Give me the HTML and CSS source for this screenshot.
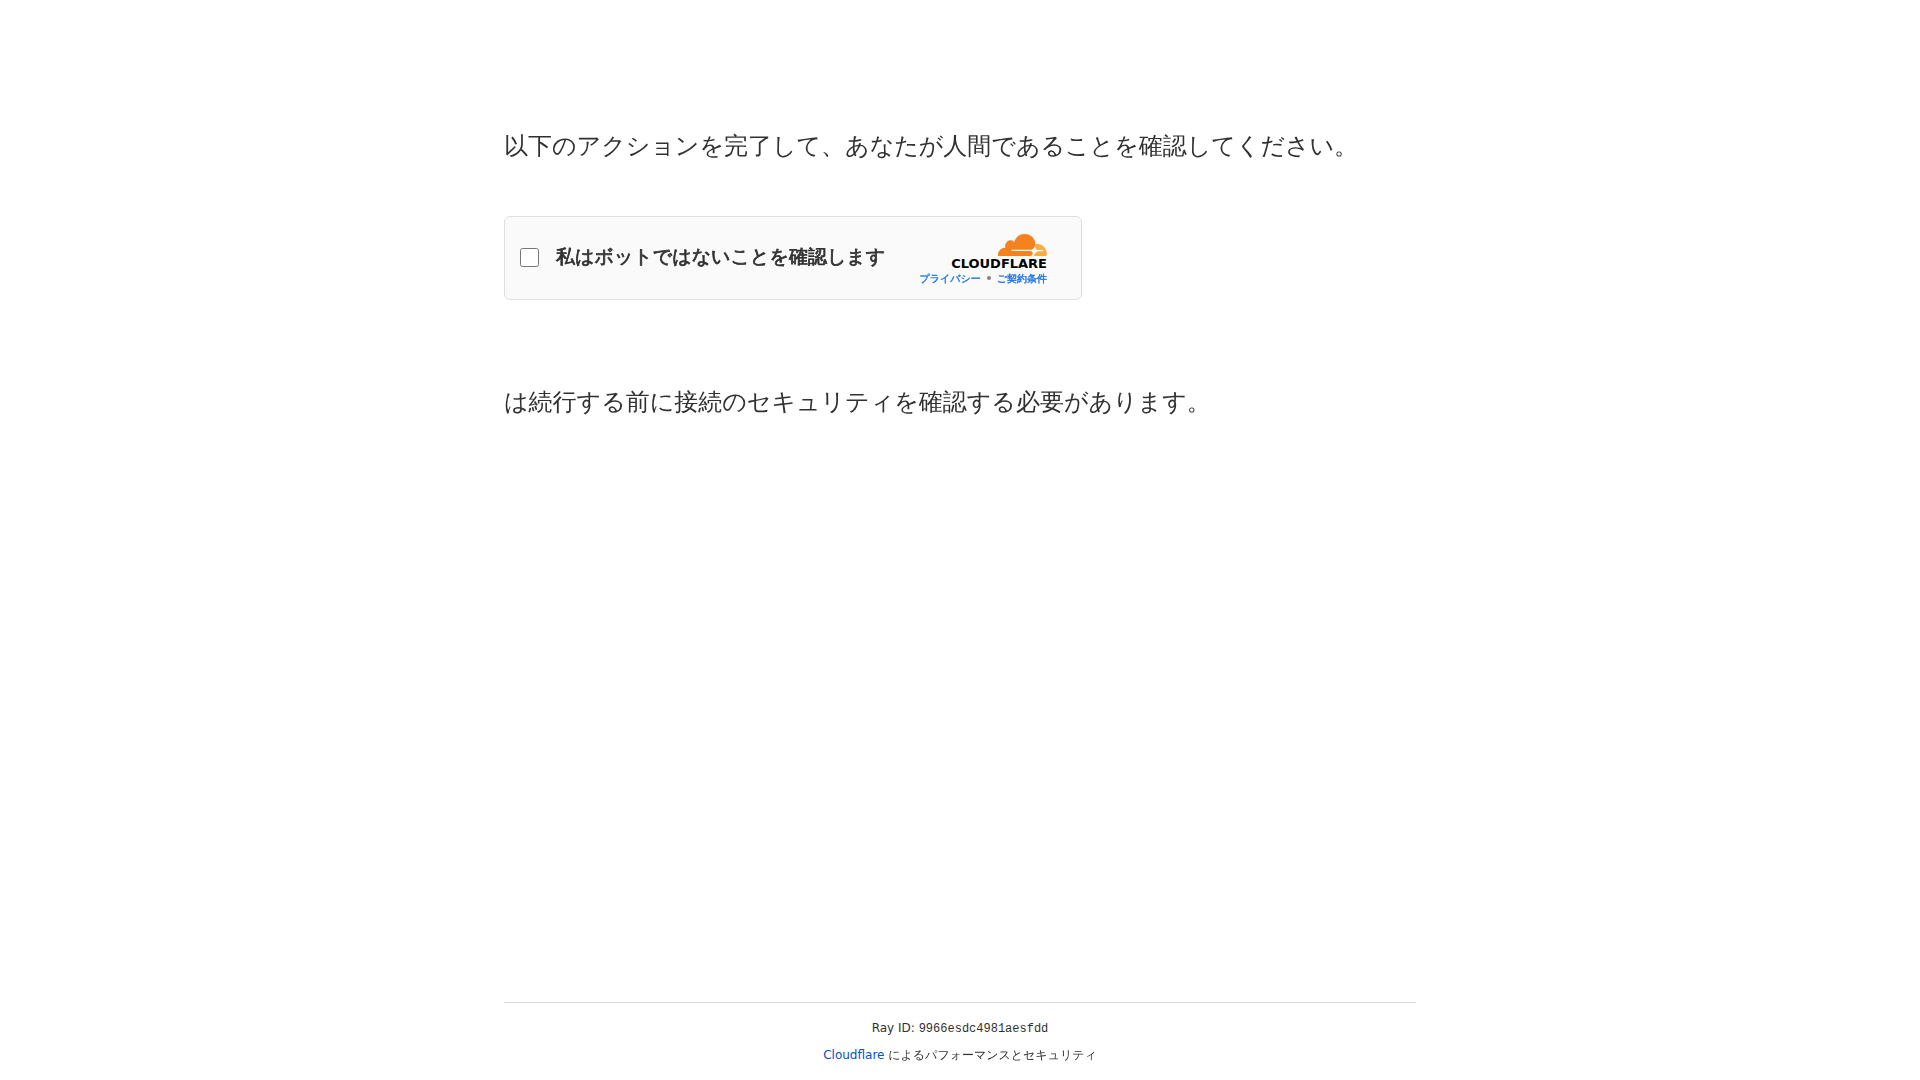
FILE: index.html
```html
<!DOCTYPE html>
<html lang="ja">
<head>
    <meta charset="UTF-8">
    <meta name="viewport" content="width=device-width, initial-scale=1">
    <title>セキュリティの確認</title>
    <link rel="stylesheet" href="styles.css">
</head>
<body>
    <main class="main-content">
        <h1 class="message">以下のアクションを完了して、あなたが人間であることを確認してください。</h1>

        <div class="challenge">
            <input type="checkbox" id="verify">
            <label for="verify">私はボットではないことを確認します</label>

            <div class="branding">
                <svg class="cloud" viewBox="0 0 148 66" aria-hidden="true">
                    <path fill="#f6821f" d="M0 66C-1 51 8 42 22 41C19 30 28 19 38 19C43 19 46 21 49 24C54 8 66 0 80 0C99 0 113 14 113 31C113 38 110 43 104 47H42Q38 49 42 51H100Q108 56 104 62Q103 66 98 66Z"/>
                    <path fill="#fbad41" d="M115 30C134 28 148 43 148 62Q148 66 144 66H110Q106 66 109 60L113 52H136Q139 50 136 48H116L111 37Q111 31 115 30Z"/>
                    <path fill="#fff" d="M110 37Q113 48 124 50Q113 53 110 63Q108 53 98 50Q108 48 110 37Z"/>
                </svg>
                <span class="wordmark">CLOUDFLARE</span>
                <div class="links">
                    <a href="#privacy">プライバシー</a>
                    <span class="dot"></span>
                    <a href="#terms">ご契約条件</a>
                </div>
            </div>
        </div>

        <p class="message">は続行する前に接続のセキュリティを確認する必要があります。</p>
    </main>

    <footer class="footer">
        <div class="footer-inner">
            <div>Ray ID: <code>9966esdc4981aesfdd</code></div>
            <div><a href="#cloudflare">Cloudflare</a> によるパフォーマンスとセキュリティ</div>
        </div>
    </footer>
</body>
</html>
```
FILE: styles.css
```css
* {
    box-sizing: border-box;
    margin: 0;
    padding: 0;
}

body {
    display: flex;
    flex-direction: column;
    min-height: 100vh;
    background: #fff;
    color: #313131;
    font-family: "DejaVu Sans", "WenQuanYi Zen Hei", "Noto Sans CJK JP", sans-serif;
}

a {
    text-decoration: none;
}

.main-content {
    flex: 1;
    width: 100%;
    max-width: 960px;
    margin: 0 auto;
    padding: 128px 24px 0;
}

.message {
    font-size: 24px;
    font-weight: 400;
    line-height: 36px;
}

.challenge {
    display: flex;
    align-items: center;
    width: 578px;
    max-width: 100%;
    height: 84px;
    margin: 52px 0 84px;
    padding: 0 34px 2px 15px;
    background: #fafafa;
    border: 1px solid #dedede;
    border-radius: 6px;
}

.challenge input {
    width: 19px;
    height: 19px;
    margin-right: 17px;
}

.challenge label {
    font-size: 19px;
    font-weight: 700;
    -webkit-text-stroke: 0.04em;
}

.branding {
    display: flex;
    flex-direction: column;
    align-items: flex-end;
    margin-left: auto;
    padding-top: 6px;
}

.cloud {
    width: 49px;
    height: 22px;
}

.wordmark {
    color: #000;
    font-size: 13px;
    font-weight: 700;
    line-height: 16px;
}

.links {
    display: flex;
    align-items: center;
    gap: 6px;
    font-size: 10px;
    font-weight: 700;
    line-height: 14px;
    -webkit-text-stroke: 0.04em;
}

.links a {
    color: #1a73e8;
}

.dot {
    width: 4px;
    height: 4px;
    margin-bottom: 3px;
    background: #808080;
    border-radius: 50%;
}

.footer {
    width: 100%;
    max-width: 960px;
    margin: 0 auto;
    padding: 0 24px;
    font-size: 12px;
    line-height: 18px;
}

.footer-inner {
    display: flex;
    flex-direction: column;
    gap: 8px;
    padding: 16px 0;
    border-top: 1px solid #d9d9d9;
    text-align: center;
}

.footer code {
    font-family: "Liberation Mono", monospace;
}

.footer a {
    color: #0051c3;
}
```
